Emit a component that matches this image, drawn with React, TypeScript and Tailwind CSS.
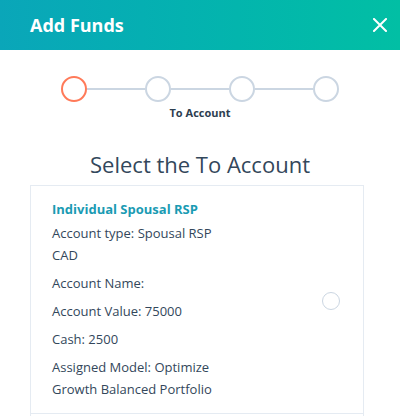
import React from "react";

const font = { fontFamily: '"Open Sans", "Liberation Sans", sans-serif' };

function Step({ active }: { active?: boolean }) {
  return (
    <div
      className={
        "w-[26px] h-[26px] rounded-full border-2 bg-white shrink-0 " +
        (active ? "border-[#ff7a59]" : "border-[#cbd6e2]")
      }
    />
  );
}

function Line() {
  return <div className="flex-1 h-[2px] bg-[#cbd6e2]" />;
}

export default function App() {
  return (
    <div className="w-[400px] h-[416px] bg-white overflow-hidden text-[#33475b]" style={font}>
      <div className="h-[50px] flex items-center justify-between pl-[30px] pr-[13px] bg-gradient-to-r from-[#0aa6b9] to-[#02bfa4]">
        <h1 className="text-white font-bold text-[18px] leading-none">Add Funds</h1>
        <svg width="14" height="14" viewBox="0 0 14 14" fill="none" stroke="white" strokeWidth="2" strokeLinecap="square">
          <path d="M1 1 L13 13 M13 1 L1 13" />
        </svg>
      </div>
      <div className="pt-[26px] px-[61px]">
        <div className="flex items-center">
          <Step active />
          <Line />
          <Step />
          <Line />
          <Step />
          <Line />
          <Step />
        </div>
      </div>
      <div className="flex justify-center">
        <span className="text-[11px] font-bold text-[#2d3e50] mt-[4px] leading-[14px] whitespace-nowrap">To Account</span>
      </div>
      <h2 className="text-center text-[22px] leading-[28px] mt-[30px] text-[#33475b]">Select the To Account</h2>
      <div className="mx-[30px] w-[334px] mt-[7px] border border-[#e5ebf2] h-[229px] flex items-start pl-[21px] pr-[23px]">
        <div className="flex-1 text-[13px] text-[#33475b] pt-[13px]">
          <div className="font-bold text-[#1a9bb3] leading-[20px]">Individual Spousal RSP</div>
          <div className="mt-[3px] leading-[22px] w-[180px]">Account type: Spousal RSP CAD</div>
          <div className="mt-[6px] leading-[22px]">Account Name:</div>
          <div className="mt-[6px] leading-[22px]">Account Value: 75000</div>
          <div className="mt-[6px] leading-[22px]">Cash: 2500</div>
          <div className="mt-[6px] leading-[22px] w-[190px]">Assigned Model: Optimize Growth Balanced Portfolio</div>
        </div>
        <div className="w-[18px] h-[18px] rounded-full border border-[#cbd6e2] self-center mt-[2px]" />
      </div>
      <div className="mx-[30px] w-[334px] border-x border-[#e5ebf2] h-[20px]" />
    </div>
  );
}
